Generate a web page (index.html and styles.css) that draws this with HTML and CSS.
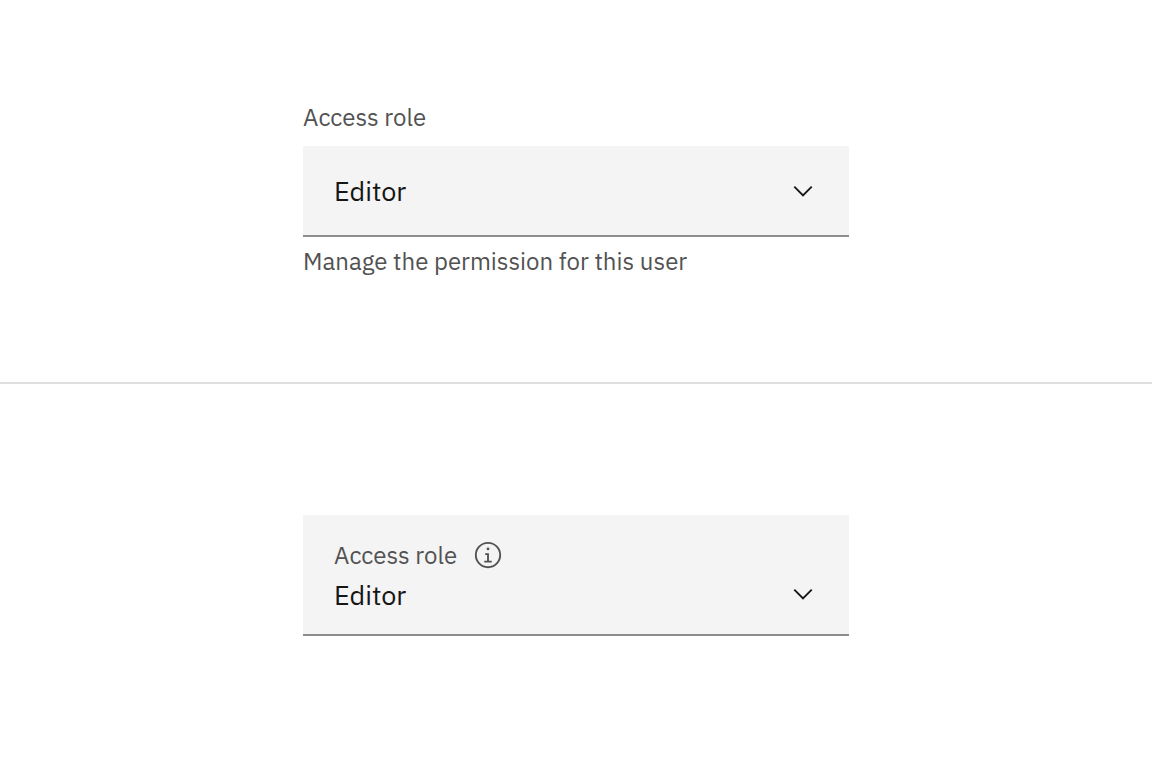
FILE: index.html
```
<!DOCTYPE html>
<html lang="en">
<head>
  <meta charset="UTF-8">
  <meta name="viewport" content="width=device-width, initial-scale=1">
  <title>Access role</title>
  <link rel="stylesheet" href="styles.css">
</head>
<body>

  <main class="page">
    <section class="panel">
      <div class="dropdown">
        <label class="label" for="role">Access role</label>
        <div class="field">
          <select class="select" id="role" aria-describedby="role-help">
            <option>Editor</option>
          </select>
          <svg class="chevron" viewBox="0 0 16 16" aria-hidden="true"><path d="M8 11 3 6l.7-.7L8 9.6l4.300-4.300.7.7z"/></svg>
        </div>
        <p class="helper" id="role-help">Manage the permission for this user</p>
      </div>
    </section>

    <section class="panel">
      <div class="dropdown dropdown-fluid">
        <div class="label-row">
          <label class="label" for="role-fluid">Access role</label>
          <button class="info" type="button" aria-label="More information">
            <svg viewBox="0 0 32 32" aria-hidden="true"><path d="M17 22v-8h-4v2h2v6h-3v2h8v-2zM16 8a1.500 1.500 0 1 0 1.500 1.500A1.500 1.500 0 0 0 16 8z"/><path d="M16 30a14 14 0 1 1 14-14 14 14 0 0 1-14 14zm0-26a12 12 0 1 0 12 12A12 12 0 0 0 16 4z"/></svg>
          </button>
        </div>
        <div class="field">
          <select class="select" id="role-fluid">
            <option>Editor</option>
          </select>
          <svg class="chevron" viewBox="0 0 16 16" aria-hidden="true"><path d="M8 11 3 6l.7-.7L8 9.6l4.300-4.300.7.7z"/></svg>
        </div>
      </div>
    </section>
  </main>

</body>
</html>
```
FILE: styles.css
```
* { box-sizing: border-box; }
body {
  margin: 0;
  background: #fff;
  color: #161616;
  font-family: "IBM Plex Sans", "Noto Sans", sans-serif;
}
.page {
  display: grid;
  grid-template-rows: 1fr 1fr;
  min-height: 100vh;
}
.panel {
  display: flex;
  align-items: center;
  justify-content: center;
  padding: 32px;
}
.panel:first-child { border-bottom: 2px solid #e0e0e0; }
.dropdown { width: 100%; max-width: 546px; }
.label,
.helper {
  display: block;
  margin: 0;
  color: #525252;
  font-size: 24px;
  line-height: 32px;
}
.label { margin-bottom: 13px; }
.helper { margin: 8px 0 3px; }
.field {
  display: grid;
  align-items: center;
  background: #f4f4f4;
  border-bottom: 2px solid #8d8d8d;
}
.select,
.chevron { grid-area: 1 / 1; }
.select {
  width: 100%;
  height: 89px;
  margin: 0;
  padding: 0 80px 0 31px;
  border: 0;
  border-radius: 0;
  appearance: none;
  background: transparent;
  color: inherit;
  font: inherit;
  font-size: 27px;
  cursor: pointer;
}
.chevron {
  justify-self: end;
  width: 30px;
  height: 30px;
  margin-right: 31px;
  fill: #161616;
  pointer-events: none;
}

/* fluid style: label sits inside the field */
.dropdown-fluid {
  padding-top: 24px;
  background: #f4f4f4;
}
.dropdown-fluid .label { margin-bottom: 0; }
.dropdown-fluid .select {
  height: 63px;
  padding-bottom: 16px;
}
.dropdown-fluid .chevron { margin-bottom: 16px; }
.label-row {
  display: flex;
  align-items: center;
  gap: 16px;
  padding-left: 31px;
}
.info {
  display: flex;
  padding: 0;
  border: 0;
  background: none;
  cursor: pointer;
}
.info svg {
  width: 30px;
  height: 30px;
  fill: #525252;
}
```
